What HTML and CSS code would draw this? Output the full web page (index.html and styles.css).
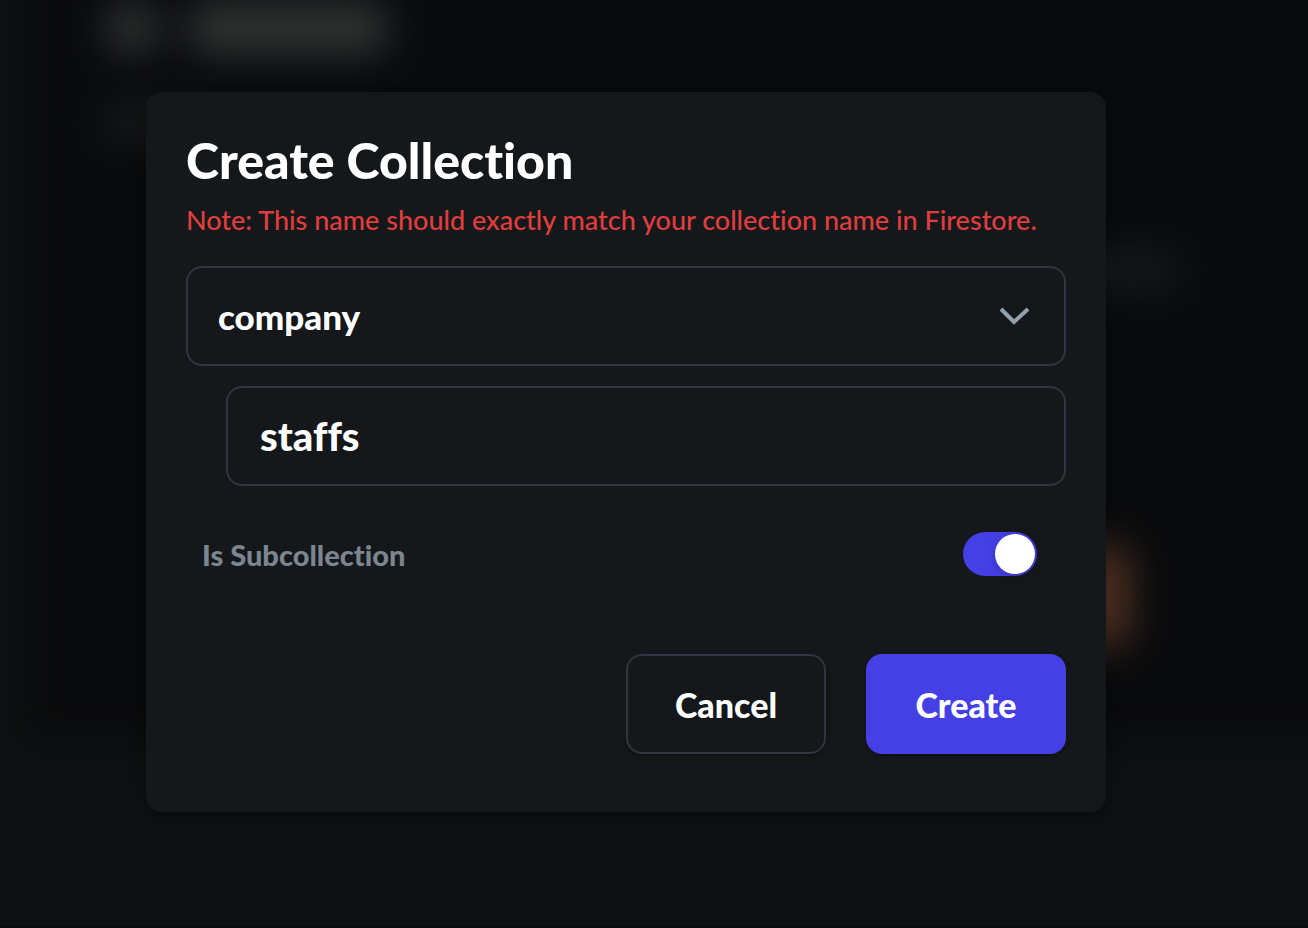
FILE: index.html
```html
<!DOCTYPE html>
<html lang="en">
	<head>
		<meta charset="utf-8">
		<meta name="viewport" content="width=device-width, initial-scale=1">
		<title>Create Collection</title>
		<link rel="stylesheet" href="styles.css">
	</head>

	<body>
		<!-- blurred page behind the dialog -->
		<div class="backdrop" aria-hidden="true">
			<div class="panel">
				<div class="panel-head">
					<span class="panel-icon"></span>
					<span class="panel-title"></span>
				</div>
				<span class="panel-label"></span>
				<span class="panel-value"></span>
				<span class="panel-action"></span>
			</div>
		</div>

		<main class="overlay">
			<form class="modal" role="dialog" aria-labelledby="modal-title">
				<h1 class="modal-title" id="modal-title">Create Collection</h1>
				<p class="modal-note">Note: This name should exactly match your collection name in Firestore.</p>

				<div class="select-wrap">
					<select class="field" name="parent" aria-label="Parent collection">
						<option selected>company</option>
					</select>
					<svg class="chevron" viewBox="0 0 32 20" aria-hidden="true">
						<path d="M3 3l13 13L30 3" />
					</svg>
				</div>

				<input class="field field-sub" type="text" name="name" value="staffs" aria-label="Collection name">

				<div class="toggle-row">
					<label class="toggle-label" for="subcollection">Is Subcollection</label>
					<input class="toggle" type="checkbox" id="subcollection" name="subcollection" checked>
				</div>

				<div class="actions">
					<button class="btn" type="button">Cancel</button>
					<button class="btn btn-primary" type="submit">Create</button>
				</div>
			</form>
		</main>
	</body>
</html>
```

FILE: styles.css
```css
* {
	box-sizing: border-box;
}

body {
	margin: 0;
	min-height: 100vh;
	display: grid;
	grid-template-columns: minmax(0, 1fr);
	background: #0d1111;
	border-bottom: 2px solid #0b090c;
	font-family: Lato, "Open Sans", sans-serif;
	font-variant-ligatures: no-common-ligatures;
	color: #fff;
}

/* backdrop and overlay share one grid cell */
.backdrop,
.overlay {
	grid-area: 1 / 1;
}

.backdrop {
	overflow: hidden;
	padding-left: 26px;
}

.panel {
	display: flex;
	flex-direction: column;
	height: 798px;
	margin: -60px -60px 0 0;
	padding: 64px 240px 0 80px;
	background: #090a0c;
	filter: blur(20px);
}

.panel-head {
	display: flex;
	gap: 28px;
}

.panel-icon {
	width: 52px;
	height: 48px;
	border-radius: 24px;
	background: #373838;
}

.panel-title {
	width: 204px;
	height: 48px;
	border-radius: 24px;
	background: #353636;
}

.panel-label {
	width: 120px;
	height: 28px;
	margin-top: 56px;
	background: #1d1e1f;
}

.panel-value {
	align-self: flex-end;
	width: 120px;
	height: 28px;
	margin: 120px -48px 0 0;
	background: #1d1e20;
}

.panel-action {
	align-self: flex-end;
	width: 240px;
	height: 100px;
	margin-top: 262px;
	border-radius: 16px;
	background: #563424;
}

.overlay {
	position: relative;
	padding: 92px 202px 92px 146px;
}

.modal {
	display: flex;
	flex-direction: column;
	max-width: 960px;
	margin: 0 auto;
	padding: 40px 40px 58px;
	border-radius: 16px;
	background: #14181a;
	box-shadow: 0 8px 16px rgba(0, 0, 0, 0.3);
}

.modal-title {
	margin: 0;
	font-size: 50px;
	line-height: 56px;
	font-weight: 900;
}

.modal-note {
	margin: 12px 0 26px;
	font-size: 27px;
	font-weight: 500;
	line-height: 40px;
	color: #e03e3e;
}

.select-wrap {
	display: grid;
	align-items: center;
}

.select-wrap > * {
	grid-area: 1 / 1;
}

.field {
	appearance: none;
	width: 100%;
	height: 100px;
	padding: 0 30px;
	border: 2px solid #2f3640;
	border-radius: 16px;
	background: transparent;
	color: #fff;
	font: inherit;
	font-size: 35px;
	font-weight: 900;
}

.field-sub {
	width: auto;
	margin: 20px 0 0 40px;
	padding: 0 32px;
	font-size: 40px;
}

.chevron {
	justify-self: end;
	width: 32px;
	height: 20px;
	margin-right: 36px;
	fill: none;
	stroke: #94a0ae;
	stroke-width: 4;
	pointer-events: none;
}

.toggle-row {
	display: flex;
	align-items: center;
	justify-content: space-between;
	margin: 46px 29px 78px 16px;
}

.toggle-label {
	font-size: 29px;
	font-weight: 900;
	color: #7c8590;
}

.toggle {
	appearance: none;
	display: flex;
	justify-content: flex-end;
	width: 74px;
	height: 44px;
	margin: 0;
	padding: 2px;
	border-radius: 22px;
	background: #4540e6;
}

.toggle::before {
	content: "";
	width: 40px;
	height: 40px;
	border-radius: 50%;
	background: #fff;
	box-shadow: 0 2px 8px rgba(0, 0, 0, 0.25);
}

.toggle:not(:checked) {
	justify-content: flex-start;
	background: #2f3640;
}

.actions {
	display: flex;
	justify-content: flex-end;
	gap: 40px;
}

.btn {
	width: 200px;
	height: 100px;
	padding: 0;
	border: 2px solid #2f3640;
	border-radius: 16px;
	background: #14181a;
	box-shadow: 0 2px 4px rgba(0, 0, 0, 0.3);
	color: #fff;
	font: inherit;
	font-size: 34px;
	font-weight: 900;
}

.btn-primary {
	border-color: #4540e6;
	background: #4540e6;
}
```
